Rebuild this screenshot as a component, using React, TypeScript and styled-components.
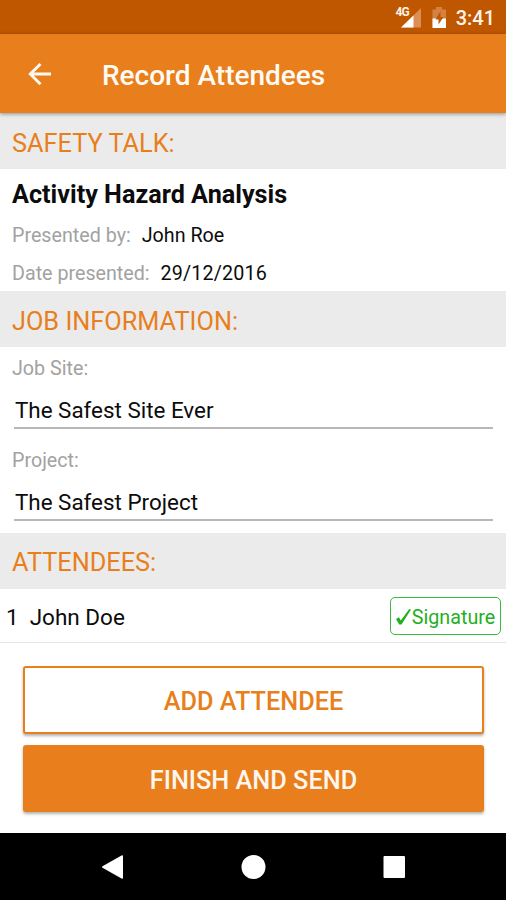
import React from 'react';
import styled, { createGlobalStyle } from 'styled-components';

const ORANGE = '#e87f1c';

const GlobalStyle = createGlobalStyle`
  *, *::before, *::after { box-sizing: border-box; }
  html, body { margin: 0; padding: 0; background: #fff; }
  body { font-family: Roboto, "Liberation Sans", sans-serif; color: #0c0c0c; }
`;

const Screen = styled.div`
  width: 506px;
  height: 900px;
  display: flex;
  flex-direction: column;
  overflow: hidden;
  background: #fff;
`;

const StatusBar = styled.div`
  height: 34px;
  flex: none;
  display: flex;
  align-items: center;
  justify-content: flex-end;
  padding: 2px 11px 0 0;
  background: #bf5600;
  color: #fff4ea;
`;

const StatusIcons = styled.svg`
  display: block;
  margin-right: 9px;
`;

const NetworkLabel = styled.span`
  align-self: flex-start;
  padding-top: 4px;
  margin-right: -10px;
  font-size: 12px;
  line-height: 12px;
  font-weight: 700;
  letter-spacing: -1px;
`;

const Clock = styled.span`
  font-size: 20px;
  line-height: 32px;
  font-weight: 500;
`;

const Toolbar = styled.header`
  position: relative;
  height: 79px;
  flex: none;
  display: flex;
  align-items: center;
  padding: 2px 0 0 28px;
  background: ${ORANGE};
  color: #fffaf4;
  box-shadow: 0 1px 4px rgba(0, 0, 0, 0.4);
`;

const BackButton = styled.button`
  display: flex;
  padding: 0;
  border: 0;
  background: none;
  color: inherit;
`;

const Title = styled.h1`
  margin: 0 0 0 50px;
  padding-top: 2px;
  font-size: 28px;
  line-height: 36px;
  font-weight: 500;
`;

const SectionHeader = styled.h2<{ $raised?: boolean }>`
  height: 56px;
  flex: none;
  margin: 0;
  padding: ${(p) => (p.$raised ? 3 : 4)}px 12px 0;
  background: #ebebeb;
  color: ${ORANGE};
  font-size: 25.3px;
  line-height: 53px;
  font-weight: 400;
`;

const TalkDetails = styled.section`
  height: 122px;
  flex: none;
  padding: 4px 12px 0;
`;

const TalkName = styled.h3`
  margin: 0;
  font-size: 25.2px;
  line-height: 44px;
  font-weight: 700;
`;

const Detail = styled.div`
  display: flex;
  gap: 11px;
  font-size: 19.7px;
  line-height: 38px;
`;

const Label = styled.span`
  color: #a2a2a2;
`;

const DateValue = styled.span`
  letter-spacing: 0.15px;
`;

const JobFields = styled.section`
  height: 186px;
  flex: none;
  padding: 2px 12px 0;
`;

const Field = styled.label`
  display: block;
  height: 92px;
`;

const FieldLabel = styled(Label)`
  display: block;
  font-size: 19.7px;
  line-height: 40px;
`;

const FieldValue = styled.div`
  height: 40px;
  margin: 0 1px 0 2px;
  padding: 3px 0 0 1px;
  border-bottom: 2px solid #b8b8b8;
  font-size: 22.4px;
  line-height: 37px;
`;

const AttendeeRow = styled.div`
  height: 54px;
  flex: none;
  display: flex;
  align-items: center;
  padding: 1px 5px 0 6px;
  border-bottom: 1px solid #e4e4e4;
  font-size: 22.5px;
`;

const AttendeeNumber = styled.span`
  padding-top: 2px;
`;

const AttendeeName = styled.span`
  flex: 1;
  margin-left: 11px;
  padding-top: 2px;
`;

const SignatureBadge = styled.span`
  width: 111px;
  height: 38px;
  display: flex;
  align-items: center;
  justify-content: center;
  padding-top: 2px;
  border: 1.5px solid #3fb83f;
  border-radius: 5px;
  color: #1fb01f;
  font-size: 19.7px;
`;

const Actions = styled.div`
  flex: 1;
  display: flex;
  flex-direction: column;
  gap: 11px;
  padding: 23px 22px 0 23px;
`;

const ActionButton = styled.button<{ $filled?: boolean }>`
  height: 67.5px;
  padding: 4px 0 0;
  border: 2.5px solid ${ORANGE};
  border-radius: 3px;
  background: ${(p) => (p.$filled ? ORANGE : '#fff')};
  color: ${(p) => (p.$filled ? '#fff6ee' : ORANGE)};
  box-shadow: 0 2px 3px rgba(0, 0, 0, 0.3);
  font-family: inherit;
  font-size: 25.3px;
  font-weight: 500;
`;

const NavBar = styled.nav`
  height: 67px;
  flex: none;
  display: flex;
  align-items: center;
  justify-content: center;
  gap: 116px;
  background: #000;
`;

const NavIcon = styled.svg`
  display: block;
  fill: #fff;
`;

export default function App() {
  return (
    <>
      <GlobalStyle />
      <Screen>
        <StatusBar>
          <NetworkLabel>4G</NetworkLabel>
          <StatusIcons width="48" height="24" viewBox="0 0 48 24">
            <path d="M22 2v19.500H2z" fill="#dc8e55" />
            <path d="M14.500 9.500v12H2z" fill="#fff" />
            <path d="M37 1h6v2.500H47v18H33.500V3.500H37z" fill="#d58144" />
            <path d="M33.500 12.500H47v9.500H33.500z" fill="#fff" />
            <path d="M41.500 5v6H44.500l-5 7.500v-5H36.500z" fill="#bf5600" />
          </StatusIcons>
          <Clock>3:41</Clock>
        </StatusBar>
        <Toolbar>
          <BackButton aria-label="Back">
            <svg width="24" height="24" viewBox="0 0 24 24" fill="none" stroke="currentColor" strokeWidth="2.900">
              <path d="M23 11H2.500M12.500 1L2.300 11l10.200 10.200" />
            </svg>
          </BackButton>
          <Title>Record Attendees</Title>
        </Toolbar>

        <SectionHeader>SAFETY TALK:</SectionHeader>
        <TalkDetails>
          <TalkName>Activity Hazard Analysis</TalkName>
          <Detail>
            <Label>Presented by:</Label>
            <span>John Roe</span>
          </Detail>
          <Detail>
            <Label>Date presented:</Label>
            <DateValue>29/12/2016</DateValue>
          </Detail>
        </TalkDetails>

        <SectionHeader>JOB INFORMATION:</SectionHeader>
        <JobFields>
          <Field>
            <FieldLabel>Job Site:</FieldLabel>
            <FieldValue>The Safest Site Ever</FieldValue>
          </Field>
          <Field>
            <FieldLabel>Project:</FieldLabel>
            <FieldValue>The Safest Project</FieldValue>
          </Field>
        </JobFields>

        <SectionHeader $raised>ATTENDEES:</SectionHeader>
        <AttendeeRow>
          <AttendeeNumber>1</AttendeeNumber>
          <AttendeeName>John Doe</AttendeeName>
          <SignatureBadge>
            <svg width="16" height="18" viewBox="0 0 16 18" fill="currentColor">
              <path d="M0 11l3-1.800 1.800 3.300L13.300 1l1.700.5L5.500 16.500H3.200z" />
            </svg>
            Signature
          </SignatureBadge>
        </AttendeeRow>

        <Actions>
          <ActionButton>ADD ATTENDEE</ActionButton>
          <ActionButton $filled>FINISH AND SEND</ActionButton>
        </Actions>

        <NavBar>
          <NavIcon width="24" height="26" viewBox="0 0 24 26">
            <path d="M21.500 1.500q1.500-.8 1.500.8v21.400q0 1.600-1.500.8L2.500 13.800q-1.200-.8 0-1.600z" />
          </NavIcon>
          <NavIcon width="26" height="26" viewBox="0 0 26 26">
            <circle cx="13.500" cy="13" r="12" />
          </NavIcon>
          <NavIcon width="24" height="26" viewBox="0 0 24 26">
            <rect x="1.500" y="2" width="21.500" height="22" rx="1" />
          </NavIcon>
        </NavBar>
      </Screen>
    </>
  );
}
